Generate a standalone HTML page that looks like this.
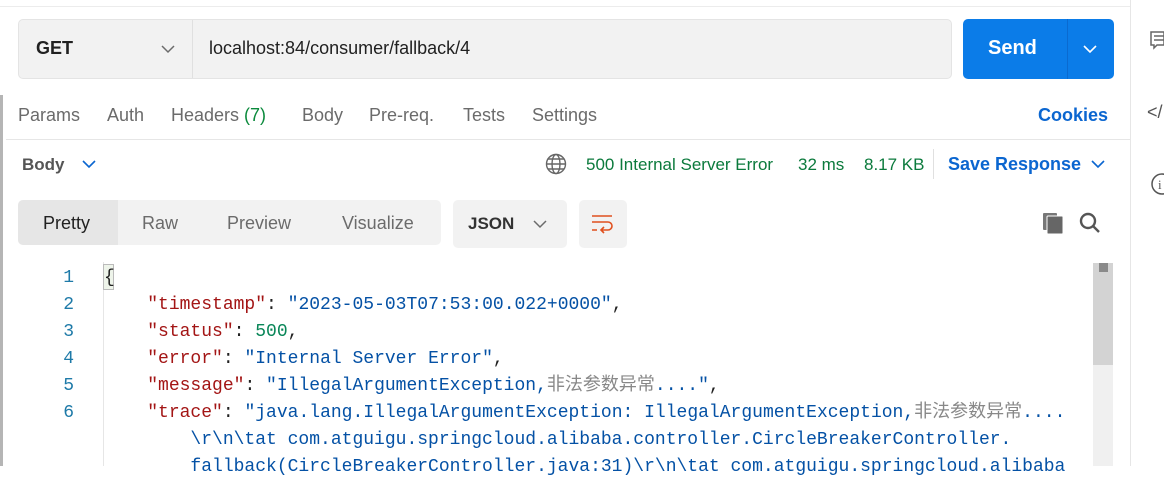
<!DOCTYPE html>
<html><head><meta charset="utf-8"><style>
*{margin:0;padding:0;box-sizing:border-box}
body{width:1164px;height:466px;overflow:hidden;background:#fff;font-family:"Liberation Sans",sans-serif;position:relative;color:#212121}
.a{position:absolute}
.t{font-size:18px;color:#6b6b6b;top:105px}
.code{font-family:"Liberation Mono","Noto Sans CJK SC",monospace;font-size:18px;white-space:pre;line-height:27px}
.k{color:#a31515}.s{color:#0451a5}.n{color:#098658}.p{color:#212121}
.ln{color:#1e7aa8;font-family:"Liberation Mono",monospace;font-size:18px;width:40px;text-align:right;left:34px}
</style></head><body>
<div class="a" style="left:0;top:6px;width:1130px;height:1px;background:#ececec"></div>
<div class="a" style="left:1130px;top:0;width:1px;height:466px;background:#e6e6e6"></div>
<div class="a" style="left:0;top:95px;width:3px;height:371px;background:#b5b5b5"></div>
<div class="a" style="left:18px;top:19px;width:934px;height:60px;background:#f2f2f2;border:1px solid #e4e4e4;border-radius:5px"></div>
<div class="a" style="left:192px;top:20px;width:1px;height:58px;background:#e0e0e0"></div>
<div class="a" style="left:36px;top:38px;font-size:18px;font-weight:bold;color:#212121">GET</div>
<svg class="a" style="left:160px;top:43px" width="16" height="12"><path d="M2 3l6 6 6-6" fill="none" stroke="#6b6b6b" stroke-width="1.5"/></svg>
<div class="a" style="left:209px;top:38px;font-size:18px;color:#212121">localhost:84/consumer/fallback/4</div>
<div class="a" style="left:963px;top:19px;width:151px;height:60px;background:#0b7ce8;border-radius:5px"></div>
<div class="a" style="left:1067px;top:19px;width:1px;height:60px;background:#0a6ad0"></div>
<div class="a" style="left:988px;top:37px;font-size:20px;font-weight:bold;color:#fff">Send</div>
<svg class="a" style="left:1082px;top:43px" width="16" height="12"><path d="M2 3l6 6 6-6" fill="none" stroke="#fff" stroke-width="1.6"/></svg>
<div class="a t" style="left:18px">Params</div>
<div class="a t" style="left:107px">Auth</div>
<div class="a t" style="left:171px">Headers <span style="color:#0b8a3c">(7)</span></div>
<div class="a t" style="left:302px">Body</div>
<div class="a t" style="left:369px">Pre-req.</div>
<div class="a t" style="left:463px">Tests</div>
<div class="a t" style="left:532px">Settings</div>
<div class="a" style="left:1038px;top:105px;font-size:18px;font-weight:bold;color:#0b66d0">Cookies</div>
<div class="a" style="left:6px;top:139px;width:1124px;height:1px;background:#e6e6e6"></div>
<div class="a" style="left:22px;top:155px;font-size:17px;font-weight:bold;color:#555">Body</div>
<svg class="a" style="left:81px;top:158px" width="16" height="12"><path d="M2 3l6 6 6-6" fill="none" stroke="#0b66d0" stroke-width="1.6"/></svg>
<svg class="a" style="left:545px;top:153px" width="22" height="22" fill="none" stroke="#666" stroke-width="1.4"><circle cx="11" cy="11" r="9.5"/><ellipse cx="11" cy="11" rx="4" ry="9.5"/><path d="M1.5 11h19M3 6h16M3 16h16"/></svg>
<div class="a" style="left:586px;top:155px;font-size:17px;color:#0b7a3c">500 Internal Server Error</div>
<div class="a" style="left:798px;top:155px;font-size:17px;color:#0b7a3c">32 ms</div>
<div class="a" style="left:864px;top:155px;font-size:17px;color:#0b7a3c">8.17 KB</div>
<div class="a" style="left:933px;top:149px;width:1px;height:30px;background:#e0e0e0"></div>
<div class="a" style="left:948px;top:154px;font-size:18px;font-weight:bold;color:#0b66d0">Save Response</div>
<svg class="a" style="left:1090px;top:158px" width="16" height="12"><path d="M2 3l6 6 6-6" fill="none" stroke="#0b66d0" stroke-width="1.6"/></svg>
<div class="a" style="left:18px;top:200px;width:423px;height:45px;background:#f2f2f2;border-radius:5px"></div>
<div class="a" style="left:18px;top:200px;width:100px;height:45px;background:#e6e6e6;border-radius:5px 0 0 5px"></div>
<div class="a" style="left:43px;top:213px;font-size:18px;color:#212121">Pretty</div>
<div class="a" style="left:142px;top:213px;font-size:18px;color:#6b6b6b">Raw</div>
<div class="a" style="left:227px;top:213px;font-size:18px;color:#6b6b6b">Preview</div>
<div class="a" style="left:342px;top:213px;font-size:18px;color:#6b6b6b">Visualize</div>
<div class="a" style="left:453px;top:200px;width:114px;height:48px;background:#f2f2f2;border-radius:5px"></div>
<div class="a" style="left:468px;top:214px;font-size:17px;font-weight:bold;color:#333">JSON</div>
<svg class="a" style="left:532px;top:218px" width="16" height="12"><path d="M2 3l6 6 6-6" fill="none" stroke="#6b6b6b" stroke-width="1.5"/></svg>
<div class="a" style="left:579px;top:200px;width:48px;height:48px;background:#f2f2f2;border-radius:5px"></div>
<svg class="a" style="left:589px;top:212px" width="28" height="24" fill="none" stroke="#e0501e" stroke-width="1.6"><path d="M3 4h20M3 10h16a4 4 0 0 1 0 8h-6M15 15l-3 3 3 3M3 18h5"/></svg>
<svg class="a" style="left:1041px;top:210px" width="26" height="26"><rect x="2" y="3" width="14" height="17" fill="#777" rx="1"/><rect x="6" y="6" width="16" height="18" fill="#666" rx="1" stroke="#fff" stroke-width="1"/></svg>
<svg class="a" style="left:1077px;top:210px" width="26" height="26" fill="none" stroke="#555" stroke-width="2.4"><circle cx="11" cy="11" r="7"/><path d="M16 16l6 6"/></svg>
<svg class="a" style="left:1149px;top:30px" width="15" height="22" fill="none" stroke="#666" stroke-width="1.5"><path d="M2 2h13v13H8l-3 3v-3H2z M5 6h10M5 10h10"/></svg>
<div class="a" style="left:1147px;top:102px;font-size:18px;color:#555">&lt;/</div>
<svg class="a" style="left:1150px;top:172px" width="14" height="24" fill="none" stroke="#555" stroke-width="1.5"><circle cx="12" cy="12" r="10"/><text x="8" y="17" font-size="13" fill="#555" stroke="none" font-family="Liberation Serif">i</text></svg>
<div class="a" style="left:103px;top:262px;width:1px;height:204px;background:#e6e6e6"></div>
<div class="a" style="left:1093px;top:263px;width:20px;height:203px;background:#f0f0f0"></div>
<div class="a" style="left:1093px;top:263px;width:20px;height:102px;background:#d3d3d3"></div>
<div class="a" style="left:1099px;top:263px;width:9px;height:9px;background:#8a8a8a"></div>
<div class="a" style="left:103px;top:264px;width:11px;height:26px;background:#eef4ea;border:1px solid #bbb"></div>
<div class="a ln" style="top:265px;line-height:27px">1<br>2<br>3<br>4<br>5<br>6</div>
<div class="a code" style="left:104px;top:265px"><span class="p">{</span>
    <span class="k">"timestamp"</span>: <span class="s">"2023-05-03T07:53:00.022+0000"</span>,
    <span class="k">"status"</span>: <span class="n">500</span>,
    <span class="k">"error"</span>: <span class="s">"Internal Server Error"</span>,
    <span class="k">"message"</span>: <span class="s">"IllegalArgumentException,<span style="color:#888">非法参数异常</span>...."</span>,
    <span class="k">"trace"</span>: <span class="s">"java.lang.IllegalArgumentException: IllegalArgumentException,<span style="color:#888">非法参数异常</span>....
        \r\n\tat com.atguigu.springcloud.alibaba.controller.CircleBreakerController.
        fallback(CircleBreakerController.java:31)\r\n\tat com.atguigu.springcloud.alibaba</span></div>
</body></html>
